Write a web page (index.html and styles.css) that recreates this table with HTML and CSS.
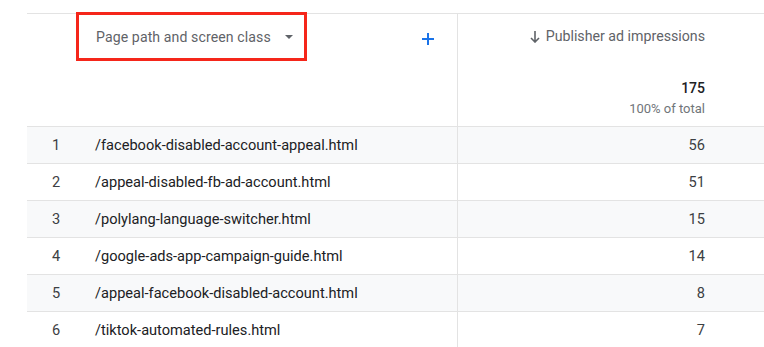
FILE: index.html
```html
<!DOCTYPE html>
<html>
<head>
<meta charset="utf-8">
<link rel="stylesheet" href="styles.css">
</head>
<body>
<div class="page">
  <div class="table">
    <div class="head">
      <div class="hcell-left">
        <div class="dim-select">
          <span class="dim-label">Page path and screen class</span>
          <svg class="caret" width="8" height="4" viewBox="0 0 8 4"><path d="M0 0 L8 0 L4 4 Z" fill="#5f6368"/></svg>
        </div>
        <svg class="plus" width="12" height="12" viewBox="0 0 12 12"><path d="M6 0 V12 M0 6 H12" stroke="#1a73e8" stroke-width="2"/></svg>
      </div>
      <div class="hcell-right">
        <div class="metric-name">
          <svg class="arrow" width="10" height="12" viewBox="0 0 10 12"><path d="M5 0 V11 M1 7 L5 11 L9 7" stroke="#5f6368" stroke-width="1.6" fill="none"/></svg>
          <span>Publisher ad impressions</span>
        </div>
        <div class="total">175</div>
        <div class="pct">100% of total</div>
      </div>
    </div>
    <div class="row alt"><div class="c-left"><span class="idx">1</span><span class="path">/facebook-disabled-account-appeal.html</span></div><div class="c-right">56</div></div>
    <div class="row"><div class="c-left"><span class="idx">2</span><span class="path">/appeal-disabled-fb-ad-account.html</span></div><div class="c-right">51</div></div>
    <div class="row alt"><div class="c-left"><span class="idx">3</span><span class="path">/polylang-language-switcher.html</span></div><div class="c-right">15</div></div>
    <div class="row"><div class="c-left"><span class="idx">4</span><span class="path">/google-ads-app-campaign-guide.html</span></div><div class="c-right">14</div></div>
    <div class="row alt"><div class="c-left"><span class="idx">5</span><span class="path">/appeal-facebook-disabled-account.html</span></div><div class="c-right">8</div></div>
    <div class="row"><div class="c-left"><span class="idx">6</span><span class="path">/tiktok-automated-rules.html</span></div><div class="c-right">7</div></div>
  </div>
</div>
</body>
</html>
```
FILE: styles.css
```css
html, body {
  margin: 0;
  padding: 0;
  background: #ffffff;
}
.page {
  width: 764px;
  height: 347px;
  overflow: hidden;
  padding: 13px 0 0 27px;
  box-sizing: border-box;
  font-family: Roboto, "Liberation Sans", sans-serif;
  color: #202124;
}
.table {
  border-top: 1px solid #e3e3e3;
}
.head {
  display: grid;
  grid-template-columns: 430px 1fr;
  height: 112px;
  border-bottom: 1px solid #e3e3e3;
}
.hcell-left {
  display: flex;
  align-items: flex-start;
}
.dim-select {
  margin: -2px 0 0 49px;
  width: 231px;
  height: 49px;
  box-sizing: border-box;
  border: 3px solid #f5261a;
  display: flex;
  align-items: center;
  padding: 0 0 0 17px;
}
.dim-label {
  font-size: 14.1px;
  color: #5f6368;
  letter-spacing: 0.1px;
}
.caret {
  margin-left: 14px;
  margin-top: 1px;
}
.plus {
  margin: 19px 0 0 115px;
}
.hcell-right {
  border-left: 1px solid #e3e3e3;
  display: flex;
  flex-direction: column;
  align-items: flex-end;
  padding-right: 59px;
}
.metric-name {
  display: flex;
  align-items: center;
  gap: 6px;
  margin-top: 14px;
  font-size: 14.2px;
  color: #5f6368;
}
.arrow {
  margin-top: 1px;
}
.total {
  margin-top: 36px;
  font-size: 14px;
  font-weight: 500;
  color: #202124;
}
.pct {
  margin-top: 5px;
  font-size: 13px;
  color: #70757a;
}
.row {
  display: grid;
  grid-template-columns: 430px 1fr;
  height: 36px;
  border-bottom: 1px solid #e3e3e3;
  font-size: 14.6px;
}
.row.alt {
  background: #f8f9fa;
}
.c-left {
  display: flex;
  align-items: center;
}
.idx {
  width: 58px;
  text-align: center;
  color: #3c4043;
}
.path {
  margin-left: 10px;
  color: #202124;
}
.c-right {
  border-left: 1px solid #e3e3e3;
  display: flex;
  align-items: center;
  justify-content: flex-end;
  padding-right: 59px;
  color: #3c4043;
}
```
